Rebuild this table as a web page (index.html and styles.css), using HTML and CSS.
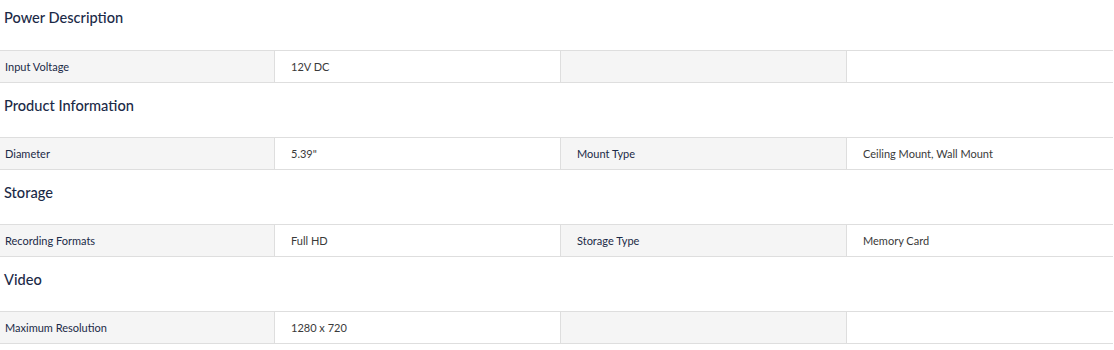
FILE: index.html
```html
<!DOCTYPE html>
<html>
<head>
<meta charset="utf-8">
<link rel="stylesheet" href="styles.css">
</head>
<body>
<section class="spec first">
  <h2 class="spec-title">Power Description</h2>
  <div class="spec-row">
    <div class="cell label first-col">Input Voltage</div>
    <div class="cell value">12V DC</div>
    <div class="cell label"></div>
    <div class="cell value"></div>
  </div>
</section>
<section class="spec">
  <h2 class="spec-title">Product Information</h2>
  <div class="spec-row">
    <div class="cell label first-col">Diameter</div>
    <div class="cell value">5.39"</div>
    <div class="cell label">Mount Type</div>
    <div class="cell value">Ceiling Mount, Wall Mount</div>
  </div>
</section>
<section class="spec">
  <h2 class="spec-title">Storage</h2>
  <div class="spec-row">
    <div class="cell label first-col">Recording Formats</div>
    <div class="cell value">Full HD</div>
    <div class="cell label">Storage Type</div>
    <div class="cell value">Memory Card</div>
  </div>
</section>
<section class="spec">
  <h2 class="spec-title">Video</h2>
  <div class="spec-row">
    <div class="cell label first-col">Maximum Resolution</div>
    <div class="cell value">1280 x 720</div>
    <div class="cell label"></div>
    <div class="cell value"></div>
  </div>
</section>
</body>
</html>
```

FILE: styles.css
```css
html, body {
  margin: 0;
  padding: 0;
  background: #ffffff;
}
body {
  font-family: Lato, "Open Sans", "Liberation Sans", sans-serif;
  width: 1113px;
}
.spec {
  display: flex;
  flex-direction: column;
}
.spec-title {
  margin: 0;
  height: 54px;
  box-sizing: border-box;
  padding: 13px 0 0 4px;
  font-size: 14.6px;
  font-weight: 500;
  line-height: 20px;
  color: #1b2a47;
}
.spec.first .spec-title {
  height: 50px;
  padding-top: 8px;
}
.spec-row {
  display: grid;
  grid-template-columns: 274px 286px 286px 1fr;
  border-top: 1px solid #dedede;
  border-bottom: 1px solid #dedede;
  height: 33px;
  box-sizing: border-box;
}
.cell {
  display: flex;
  align-items: center;
  padding-left: 16px;
  font-size: 11px;
  border-left: 1px solid #dedede;
}
.cell.first-col {
  padding-left: 5px;
  border-left: none;
}
.label {
  background: #f5f5f5;
  color: #1b2a47;
}
.value {
  background: #ffffff;
  color: #3a3a3a;
}
```
